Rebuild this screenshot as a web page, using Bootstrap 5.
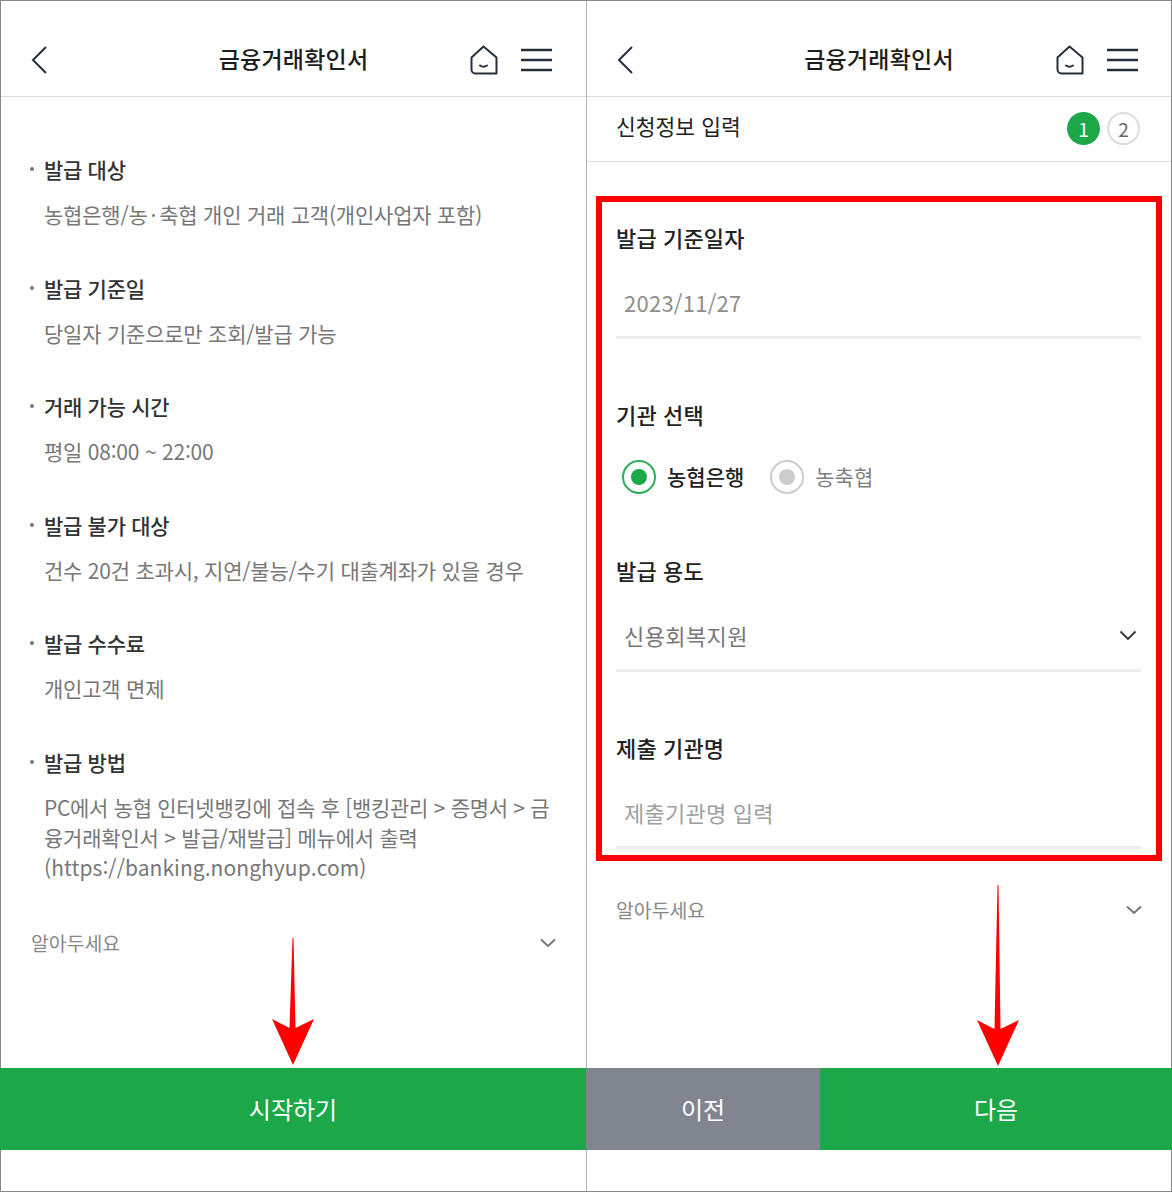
<!DOCTYPE html>
<html lang="ko">
<head>
<meta charset="utf-8">
<title>금융거래확인서</title>
<link href="https://cdn.jsdelivr.net/npm/bootstrap@5.3.0/dist/css/bootstrap.min.css" rel="stylesheet">
<style>
html,body{margin:0;height:1192px;overflow:hidden}
body{font-family:"Noto Sans CJK KR","Noto Sans",sans-serif;background:#fff;color:#222}
.stage{width:1172px;height:1192px;border-top:1px solid #888;border-bottom:1px solid #888}
.pane{width:586px;height:1190px;position:relative}
.pane-a{border-left:1px solid #888}
.pane-b{border-left:1px solid #b5b5b5;border-right:1px solid #888}
.top-head{height:96px;padding-top:23px;border-bottom:1px solid #ddd;display:grid;grid-template-columns:1fr auto 1fr;align-items:center;flex:none}
.top-head svg{display:block}
.head-title{font-size:23px;font-weight:500;color:#1d1d1d;line-height:30px;letter-spacing:.01em;margin-top:-4px}
.back-ic{margin-left:30px}
.tools{justify-self:end;margin-right:34px;gap:23px}
.pane-b .tools{margin-right:33px}
.info-list{padding:57px 30px 0 29px}
.info-item{margin-bottom:43.6px}
.info-head{font-size:21px;font-weight:500;line-height:30px;color:#333;padding-left:14px;position:relative;letter-spacing:-.3px}
.info-head::before{content:"";position:absolute;left:0;top:13px;width:4px;height:4px;border-radius:50%;background:#777}
.info-text{font-size:21px;line-height:30px;color:#777;padding-left:14px;margin-top:15px;letter-spacing:-.22px;word-break:break-all}
.mid-sep{margin:0 3px}
.tight-run{letter-spacing:-.3px}
.url-run{letter-spacing:.06px}
.note-row{font-size:19.400px;line-height:30px;color:#888}
.note-a{margin-top:45.600px;padding-left:1px}
.foot-bar{height:82px;flex:none;font-size:24px;color:#fff}
.foot-green{background:#1ca749}
.foot-grey{background:#80858f}
.spacer-end{height:41px;flex:none}
.step-row{height:65px;border-bottom:1px solid #ddd;flex:none;padding:0 31px 0 29px}
.step-name{font-size:21.500px;color:#222;line-height:30px;margin-top:-6px}
.step-dot{width:33px;height:33px;border-radius:50%;font-size:19px;line-height:1}
.dot-on{background:#1ca749;color:#fff}
.dot-off{border:2px solid #ddd;color:#666;background:#fff}
.dots-wrap{margin-top:-1px;gap:7px}
.form-frame{margin:34px 9px 0 9px;border:6px solid #f00;padding:20px 15px 6px 14px}
.field-label{font-size:22px;font-weight:500;line-height:30px;color:#222;letter-spacing:.15px}
.form-control.field-input{height:71px;margin-top:16px;border:0;border-bottom:3px solid #eee;border-radius:0;padding:0 8px;font-size:22px;letter-spacing:.25px;color:#8e8e8e;background:#fff;box-shadow:none}
.form-control.field-last{height:72px;margin-top:15px}
.form-control.field-input::placeholder{color:#a0a0a0}
.form-control.field-input:disabled{background:#fff;opacity:1}
.gap-big{margin-top:60px}
.gap-mid{margin-top:61px}
.gap-low{margin-top:60px}
.radio-row{margin-top:31px;height:34px;padding-left:6px}
.radio-ring{width:34px;height:34px;border-radius:50%;border:2px solid #2fae58;flex:none}
.radio-core{width:16px;height:16px;border-radius:50%;background:#1ca749}
.ring-off{border-color:#ccc}
.core-off{background:#ccc}
.radio-text{font-size:21px;font-weight:500;color:#222;margin:-2px 26px 0 11px;line-height:30px}
.radio-text.text-off{color:#808080;font-weight:400}
.select-box{height:70px;margin-top:17px;border-bottom:3px solid #eee;padding:0 4px 0 8px;font-size:22px;letter-spacing:.4px;color:#777}
.note-b{padding:34px 29px 0 29px}
.arrow-mark{position:absolute;pointer-events:none}
.arrow-a{left:269px;top:937px}
.arrow-b{left:388px;top:883px}
.bleed-a{margin-left:-1px}
.pane-b .foot-bar{margin-left:-1px;margin-right:-1px}
.grey-part{width:234px}
</style>
</head>
<body>
<div class="stage d-flex">
  <section class="pane pane-a d-flex flex-column">
    <header class="top-head">
      <svg class="back-ic" width="16" height="28" viewBox="0 0 16 28"><path d="M15 1 2 14l13 13" fill="none" stroke="#25303c" stroke-width="2"/></svg>
      <div class="head-title">금융거래확인서</div>
      <div class="tools d-flex align-items-center">
        <svg width="29" height="30" viewBox="0 0 29 30"><path d="M14.500 1.500 27.500 12.500V28.500H6.500A4 4 0 0 1 2.500 24.500V12.500Z" fill="none" stroke="#25303c" stroke-width="2" stroke-linejoin="round"/><path d="M11 20.500q3.500 2.500 7 0" fill="none" stroke="#25303c" stroke-width="2" stroke-linecap="round"/></svg>
        <svg width="31" height="24" viewBox="0 0 31 24"><path d="M0 2h31M0 12h31M0 22h31" stroke="#25303c" stroke-width="2.400"/></svg>
      </div>
    </header>
    <div class="info-list flex-grow-1">
      <div class="info-item"><div class="info-head">발급 대상</div><div class="info-text">농협은행/농<span class="mid-sep">·</span>축협 개인 거래 고객(개인사업자 포함)</div></div>
      <div class="info-item"><div class="info-head">발급 기준일</div><div class="info-text">당일자 기준으로만 조회/발급 가능</div></div>
      <div class="info-item"><div class="info-head">거래 가능 시간</div><div class="info-text">평일 08:00 ~ 22:00</div></div>
      <div class="info-item"><div class="info-head">발급 불가 대상</div><div class="info-text">건수 20건 초과시, 지연/불능/수기 대출계좌가 있을 경우</div></div>
      <div class="info-item"><div class="info-head">발급 수수료</div><div class="info-text">개인고객 면제</div></div>
      <div class="info-item"><div class="info-head">발급 방법</div><div class="info-text"><span class="tight-run">PC에서 농협 인터넷뱅킹에 접속 후 [뱅킹관리 &gt; 증명서 &gt; 금</span>융거래확인서 &gt; 발급/재발급] 메뉴에서 출력<br><span class="url-run">(https://banking.nonghyup.com)</span></div></div>
      <div class="note-row note-a d-flex justify-content-between align-items-center">
        <span>알아두세요</span>
        <svg width="16" height="10" viewBox="0 0 16 10"><path d="M1 1.500 8 8l7-6.500" fill="none" stroke="#777" stroke-width="2"/></svg>
      </div>
    </div>
    <div class="foot-bar foot-green d-flex align-items-center justify-content-center bleed-a">시작하기</div>
    <div class="spacer-end"></div>
    <svg class="arrow-mark arrow-a" width="46" height="130" viewBox="0 0 46 130"><path d="M22.500 0 23.500 0 25.500 90 44 81 23 127 2 81 19.500 90Z" fill="#f00"/></svg>
  </section>
  <section class="pane pane-b d-flex flex-column">
    <header class="top-head">
      <svg class="back-ic" width="16" height="28" viewBox="0 0 16 28"><path d="M15 1 2 14l13 13" fill="none" stroke="#25303c" stroke-width="2"/></svg>
      <div class="head-title">금융거래확인서</div>
      <div class="tools d-flex align-items-center">
        <svg width="29" height="30" viewBox="0 0 29 30"><path d="M14.500 1.500 27.500 12.500V28.500H6.500A4 4 0 0 1 2.500 24.500V12.500Z" fill="none" stroke="#25303c" stroke-width="2" stroke-linejoin="round"/><path d="M11 20.500q3.500 2.500 7 0" fill="none" stroke="#25303c" stroke-width="2" stroke-linecap="round"/></svg>
        <svg width="31" height="24" viewBox="0 0 31 24"><path d="M0 2h31M0 12h31M0 22h31" stroke="#25303c" stroke-width="2.400"/></svg>
      </div>
    </header>
    <div class="step-row d-flex justify-content-between align-items-center">
      <div class="step-name">신청정보 입력</div>
      <div class="dots-wrap d-flex align-items-center">
        <div class="step-dot dot-on d-flex align-items-center justify-content-center">1</div>
        <div class="step-dot dot-off d-flex align-items-center justify-content-center">2</div>
      </div>
    </div>
    <div class="form-frame">
      <div class="field-label">발급 기준일자</div>
      <input class="form-control field-input" value="2023/11/27" disabled>
      <div class="field-label gap-big">기관 선택</div>
      <div class="radio-row d-flex align-items-center">
        <span class="radio-ring d-flex align-items-center justify-content-center"><span class="radio-core"></span></span>
        <span class="radio-text">농협은행</span>
        <span class="radio-ring ring-off d-flex align-items-center justify-content-center"><span class="radio-core core-off"></span></span>
        <span class="radio-text text-off">농축협</span>
      </div>
      <div class="field-label gap-mid">발급 용도</div>
      <div class="select-box d-flex justify-content-between align-items-center">
        <span>신용회복지원</span>
        <svg width="18" height="11" viewBox="0 0 18 11"><path d="M1.500 1.500 9 9l7.500-7.500" fill="none" stroke="#333" stroke-width="1.800"/></svg>
      </div>
      <div class="field-label gap-low">제출 기관명</div>
      <input class="form-control field-input field-last" placeholder="제출기관명 입력">
    </div>
    <div class="note-row note-b d-flex justify-content-between align-items-center">
      <span>알아두세요</span>
      <svg width="16" height="10" viewBox="0 0 16 10"><path d="M1 1.500 8 8l7-6.500" fill="none" stroke="#777" stroke-width="2"/></svg>
    </div>
    <div class="flex-grow-1"></div>
    <div class="foot-bar d-flex">
      <div class="foot-grey d-flex align-items-center justify-content-center grey-part">이전</div>
      <div class="foot-green d-flex align-items-center justify-content-center flex-grow-1">다음</div>
    </div>
    <div class="spacer-end"></div>
    <svg class="arrow-mark arrow-b" width="46" height="184" viewBox="0 0 46 184"><path d="M22.500 1 23.500 1 25.500 145 44 136 23 182 2 136 19.500 145Z" fill="#f00"/></svg>
  </section>
</div>
<script src="https://cdn.jsdelivr.net/npm/bootstrap@5.3.0/dist/js/bootstrap.bundle.min.js"></script>
</body>
</html>
